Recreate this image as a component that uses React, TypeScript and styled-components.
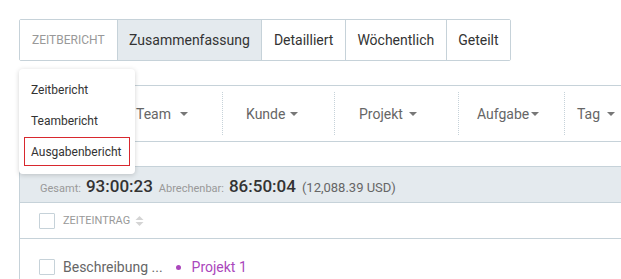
import React from "react";
import styled, { createGlobalStyle } from "styled-components";

const Global = createGlobalStyle`
  html, body { margin: 0; padding: 0; background: #fff; }
  body { font-family: Roboto, "Liberation Sans", Arial, sans-serif; }
  * { box-sizing: border-box; }
`;

const BORDER = "#c6d2d9";

const Page = styled.div`
  position: relative;
  width: 621px;
  height: 279px;
  overflow: hidden;
  padding: 19px 0 0 19px;
`;

const Tabs = styled.div`
  display: inline-flex;
  height: 42px;
  border: 1px solid ${BORDER};
  border-radius: 2px;
`;

const Tab = styled.div<{ $active?: boolean; $label?: boolean }>`
  display: flex;
  align-items: center;
  padding: ${(p) => (p.$label ? "0 12px" : "0 11.5px")};
  font-size: ${(p) => (p.$label ? "12px" : "14px")};
  text-transform: ${(p) => (p.$label ? "uppercase" : "none")};
  color: ${(p) => (p.$label ? "#999" : "#333")};
  background: ${(p) => (p.$active ? "#e4eaee" : "#fff")};
  & + & {
    border-left: 1px solid ${BORDER};
  }
`;

const FilterBar = styled.div`
  display: flex;
  margin-top: 24px;
  height: 57px;
  border-top: 1px solid ${BORDER};
  border-bottom: 1px solid ${BORDER};
  padding: 6px 0;
  width: 700px;
`;

const FilterItem = styled.div<{ $w: number; $pl: number; $first?: boolean }>`
  display: flex;
  align-items: center;
  flex: 0 0 ${(p) => p.$w}px;
  padding-left: ${(p) => p.$pl}px;
  border-left: ${(p) => (p.$first ? "none" : `1px dotted ${BORDER}`)};
  font-size: 14px;
  color: #666;
`;

const Caret = styled.span<{ $gap: number }>`
  display: inline-block;
  margin-left: ${(p) => p.$gap}px;
  width: 0;
  height: 0;
  border-left: 4px solid transparent;
  border-right: 4px solid transparent;
  border-top: 4px solid #777;
`;

const Card = styled.div`
  margin-top: 24px;
  border: 1px solid ${BORDER};
  border-right: none;
  width: 700px;
`;

const Summary = styled.div`
  display: flex;
  align-items: baseline;
  height: 36px;
  padding: 9px 20px 0;
  background: #e4eaee;
  border-bottom: 1px solid ${BORDER};
`;

const SumLabel = styled.span`
  font-size: 11px;
  color: #999;
  margin-right: 5px;
`;

const SumValue = styled.span`
  font-size: 17px;
  font-weight: 500;
  color: #333;
  margin-right: 6px;
`;

const SumExtra = styled.span`
  font-size: 13px;
  color: #666;
`;

const HeaderRow = styled.div`
  display: flex;
  align-items: center;
  height: 36px;
  padding-left: 19px;
  border-bottom: 1px solid ${BORDER};
`;

const Checkbox = styled.span`
  display: inline-block;
  flex: 0 0 16px;
  width: 16px;
  height: 16px;
  border: 1px solid ${BORDER};
  border-radius: 1px;
  margin-right: 8px;
`;

const HeadText = styled.span`
  font-size: 11px;
  color: #999;
  text-transform: uppercase;
`;

const SortIcon = styled.svg`
  margin-left: 5px;
`;

const Row = styled.div`
  display: flex;
  padding: 20px 0 0 19px;
  height: 60px;
  align-items: flex-start;
`;

const RowText = styled.span`
  font-size: 14px;
  color: #666;
  line-height: 16px;
`;

const Dot = styled.span`
  display: inline-block;
  width: 5px;
  height: 5px;
  border-radius: 50%;
  background: #ab47bc;
  margin: 6px 11px 0 13px;
`;

const ProjectName = styled.span`
  font-size: 14px;
  color: #ab47bc;
  line-height: 16px;
`;

const Dropdown = styled.div`
  position: absolute;
  left: 19px;
  top: 69px;
  width: 116px;
  padding: 6px 5px 8px;
  background: #fff;
  border-radius: 4px;
  box-shadow: 0 1px 5px rgba(0, 0, 0, 0.18);
  display: flex;
  flex-direction: column;
  gap: 2px;
`;

const MenuItem = styled.div<{ $selected?: boolean }>`
  height: 29px;
  display: flex;
  align-items: center;
  padding-left: 6px;
  font-size: 12px;
  color: #333;
  border: 1px solid ${(p) => (p.$selected ? "#d8282e" : "transparent")};
`;

const filters = [
  { label: "Team", w: 109, pl: 22, gap: 9 },
  { label: "Kunde", w: 112, pl: 23, gap: 5 },
  { label: "Projekt", w: 124, pl: 24, gap: 6 },
  { label: "Aufgabe", w: 106, pl: 18, gap: 2 },
  { label: "Tag", w: 120, pl: 12, gap: 7 },
];

export default function App() {
  return (
    <>
      <Global />
      <Page>
        <Tabs>
          <Tab $label>Zeitbericht</Tab>
          <Tab $active>Zusammenfassung</Tab>
          <Tab>Detailliert</Tab>
          <Tab>Wöchentlich</Tab>
          <Tab>Geteilt</Tab>
        </Tabs>
        <FilterBar>
          <FilterItem $w={94} $pl={0} $first />
          {filters.map((f) => (
            <FilterItem key={f.label} $w={f.w} $pl={f.pl}>
              {f.label}
              <Caret $gap={f.gap} />
            </FilterItem>
          ))}
        </FilterBar>
        <Card>
          <Summary>
            <SumLabel>Gesamt:</SumLabel>
            <SumValue>93:00:23</SumValue>
            <SumLabel>Abrechenbar:</SumLabel>
            <SumValue>86:50:04</SumValue>
            <SumExtra>(12,088.39 USD)</SumExtra>
          </Summary>
          <HeaderRow>
            <Checkbox />
            <HeadText>Zeiteintrag</HeadText>
            <SortIcon width="9" height="12" viewBox="0 0 9 12">
              <path d="M4.5 1 L8.5 5 L0.5 5 Z" fill="#d4d4d4" />
              <path d="M4.5 11 L8.5 7 L0.5 7 Z" fill="#d4d4d4" />
            </SortIcon>
          </HeaderRow>
          <Row>
            <Checkbox />
            <RowText>Beschreibung ...</RowText>
            <Dot />
            <ProjectName>Projekt 1</ProjectName>
          </Row>
        </Card>
        <Dropdown>
          <MenuItem>Zeitbericht</MenuItem>
          <MenuItem>Teambericht</MenuItem>
          <MenuItem $selected>Ausgabenbericht</MenuItem>
        </Dropdown>
      </Page>
    </>
  );
}
